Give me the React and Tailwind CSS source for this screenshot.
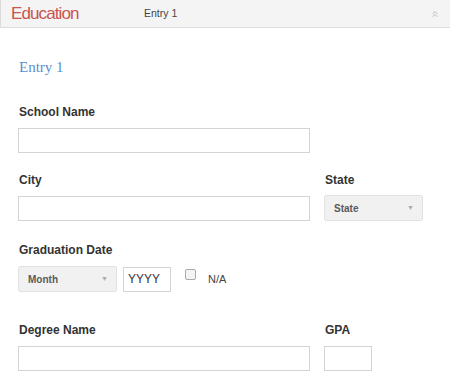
import React from "react";
import {ChevronsUp} from "lucide-react";

const Label = ({children, className = ""}) => (
  <div className={`text-[12px] leading-[14px] font-bold text-[#333] ${className}`}>{children}</div>
);

const TextBox = ({className = ""}) => (
  <div className={`h-[25px] border border-[#d4d4d4] bg-white ${className}`} />
);

const SelectBox = ({label, className = ""}) => (
  <div
    className={`h-[26px] bg-[#f1f1f1] border border-[#e2e2e2] rounded-[2px] flex items-center justify-between pl-[9px] pr-[8px] ${className}`}>
    <span className="text-[10px] font-bold text-[#5a5a5a]">{label}</span>
    <span className="text-[7px] text-[#aaa]">▼</span>
  </div>
);

export default function App() {
  return (
    <div className="w-[450px] h-[390px] bg-white overflow-hidden font-['Liberation_Sans',Arial,sans-serif]">
      {/* header bar */}
      <div className="h-[28px] bg-[#f4f4f4] border-b border-[#dcdcdc] border-l flex items-center">
        <span className="w-[143px] pl-[10px] text-[17px] tracking-[-0.9px] text-[#c9534f] leading-none">Education</span>
        <span className="text-[10.5px] text-[#444]">Entry 1</span>
        <ChevronsUp className="ml-auto mr-[10px] text-[#999]" size={10} strokeWidth={1.5} />
      </div>

      <div className="pl-[18px]">
        <div className="mt-[30px] text-[15px] leading-[18px] text-[#5b8fd0] font-['Liberation_Serif',serif] pl-[1px]">
          Entry 1
        </div>

        <Label className="mt-[29px] pl-[1px]">School Name</Label>
        <TextBox className="mt-[9px] w-[292px]" />

        <div className="mt-[20px] grid grid-cols-[292px_99px] gap-x-[14px]">
          <Label className="pl-[1px]">City</Label>
          <Label className="pl-[1px]">State</Label>
          <TextBox className="mt-[9px]" />
          <SelectBox label="State" className="mt-[8px]" />
        </div>

        <Label className="mt-[22px] pl-[1px]">Graduation Date</Label>
        <div className="mt-[9px] flex items-center">
          <SelectBox label="Month" className="w-[99px]" />
          <div className="ml-[6px] w-[48px] h-[25px] border border-[#d4d4d4] flex items-center pl-[4px] text-[12px] text-[#333]">
            YYYY
          </div>
          <div className="ml-[14px] mb-[10px] w-[11px] h-[11px] border border-[#aaa] rounded-[2px] bg-[#f4f4f4]" />
          <span className="ml-[12px] text-[11px] text-[#444]">N/A</span>
        </div>

        <div className="mt-[31px] grid grid-cols-[292px_48px] gap-x-[14px]">
          <Label className="pl-[1px]">Degree Name</Label>
          <Label className="pl-[1px]">GPA</Label>
          <TextBox className="mt-[9px]" />
          <TextBox className="mt-[9px]" />
        </div>
      </div>
    </div>
  );
}
